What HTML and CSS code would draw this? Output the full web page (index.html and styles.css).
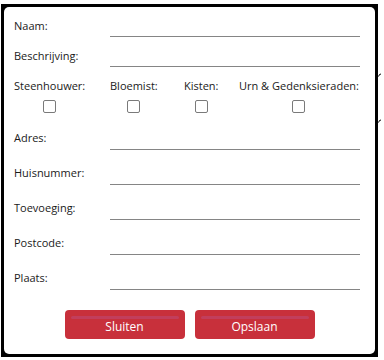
FILE: index.html
```html
<!DOCTYPE html>
<html lang="nl">
<head>
  <meta charset="UTF-8" />
  <meta name="viewport" content="width=device-width, initial-scale=1.0">
  <title>Uitvaartondernemer</title>
  <link rel="stylesheet" href="styles.css">
</head>
<body>
  <div class="window">
    <form class="dialog">
      <div class="row row-tight">
        <label>Naam:</label>
        <span class="field"></span>
      </div>
      <div class="row row-tight">
        <label>Beschrijving:</label>
        <span class="field"></span>
      </div>

      <div class="choices">
        <div class="choice"><span>Steenhouwer:</span><span class="check"></span></div>
        <div class="choice"><span>Bloemist:</span><span class="check"></span></div>
        <div class="choice"><span>Kisten:</span><span class="check"></span></div>
        <div class="choice"><span>Urn &amp; Gedenksieraden:</span><span class="check"></span></div>
      </div>

      <div class="row">
        <label>Adres:</label>
        <span class="field"></span>
      </div>
      <div class="row">
        <label>Huisnummer:</label>
        <span class="field"></span>
      </div>
      <div class="row">
        <label>Toevoeging:</label>
        <span class="field"></span>
      </div>
      <div class="row">
        <label>Postcode:</label>
        <span class="field"></span>
      </div>
      <div class="row">
        <label>Plaats:</label>
        <span class="field"></span>
      </div>

      <div class="actions">
        <button type="button">Sluiten</button>
        <button type="button">Opslaan</button>
      </div>
    </form>
  </div>

  <!-- stray marks of the window behind -->
  <svg class="tick tick-a" width="4" height="4" viewBox="0 0 4 4"><path d="M0.5 3.5 L1.5 1.5 L3 1" fill="none" stroke="#000" stroke-width="1"/></svg>
  <svg class="tick tick-b" width="4" height="4" viewBox="0 0 4 4"><path d="M0.5 3.5 L1.5 1.5 L3 1" fill="none" stroke="#000" stroke-width="1"/></svg>
</body>
</html>
```

FILE: styles.css
```css
body {
  margin: 0;
  padding: 4px 0 0 1px;
  background: #fff;
  font-family: 'Open Sans', 'Noto Sans', sans-serif;
  font-size: 11px;
  line-height: 15px;
  color: #1a1a1a;
}
.window {
  width: 371px;
  height: 347px;
  padding: 3px;
  background: #000;
}
.dialog {
  box-sizing: border-box;
  height: 100%;
  margin: 0;
  padding: 0 15px 0 10px;
  background: #fff;
  border-radius: 5px;
}
.row {
  display: grid;
  grid-template-columns: 96px 250px;
  align-items: end;
  height: 35px;
}
.row-tight {
  height: 30px;
}
.row label {
  margin-bottom: 4px;
  white-space: nowrap;
}
.row:not(.row-tight) label {
  margin-bottom: 5px;
}
.field {
  height: 20px;
  border-bottom: 1px solid #858585;
}
.choices {
  display: grid;
  grid-template-columns: 96px 74px 55px auto;
  height: 48px;
  padding-top: 11px;
  box-sizing: border-box;
}
.choice {
  display: inline-flex;
  flex-direction: column;
  align-items: center;
  justify-self: start;
  gap: 7px;
  white-space: nowrap;
}
.check {
  width: 11px;
  height: 11px;
  border: 1px solid #7a7a7a;
  border-radius: 2px;
  background: #fff;
}
.actions {
  display: flex;
  justify-content: center;
  gap: 10px;
  margin-top: 20px;
  padding-left: 5px;
}
.actions button {
  position: relative;
  width: 120px;
  height: 29px;
  padding: 3px 0 0;
  border: none;
  border-radius: 4px;
  background: #c8303b;
  color: #fff;
  font-family: 'Open Sans', 'Noto Sans', sans-serif;
  font-size: 12px;
}
.actions button::before {
  content: '';
  position: absolute;
  top: 6px;
  left: 6px;
  right: 6px;
  height: 3px;
  border-radius: 2px;
  background: #c23e5c;
}
.tick {
  position: absolute;
  left: 378px;
}
.tick-a {
  top: 73px;
}
.tick-b {
  top: 119px;
}
```
